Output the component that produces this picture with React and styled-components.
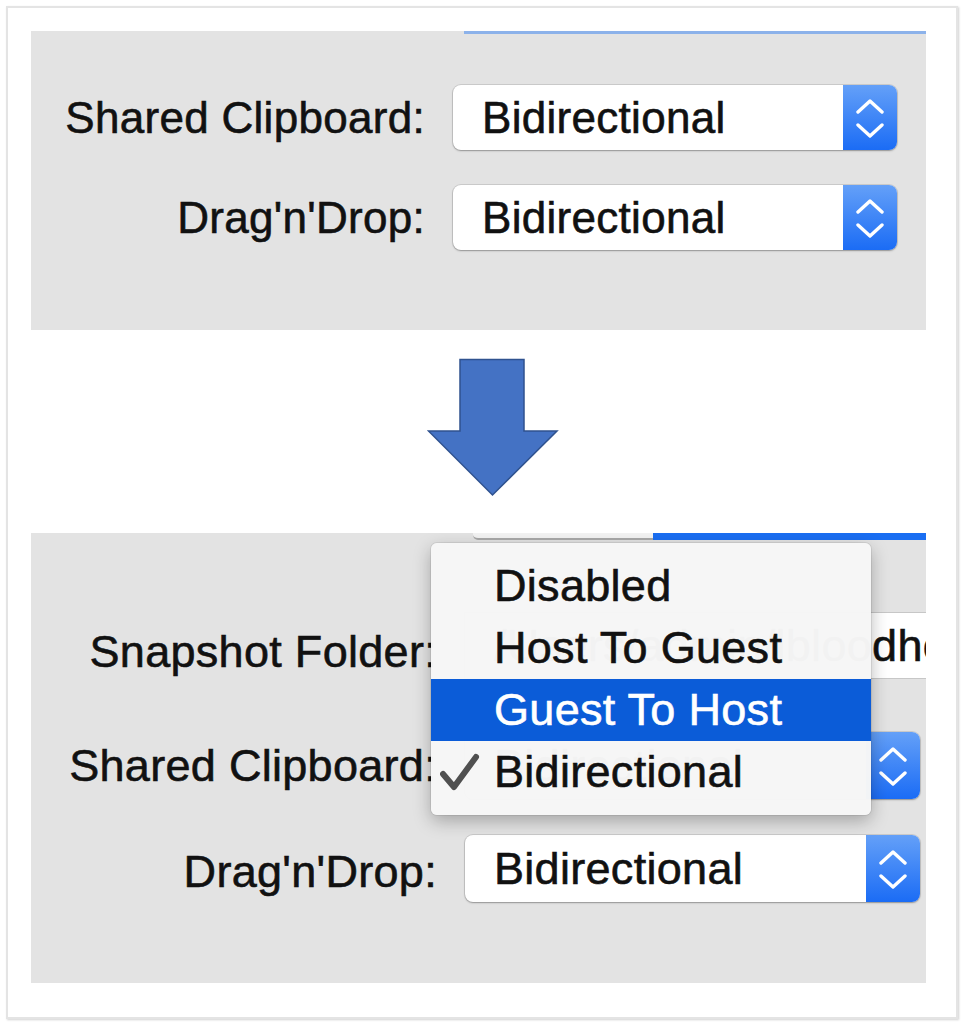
import React from 'react'
import styled, { createGlobalStyle } from 'styled-components'

const GlobalStyle = createGlobalStyle`
  html, body {
    margin: 0;
    padding: 0;
    background: #fff;
  }

  body {
    font-family: 'Liberation Sans', Arial, sans-serif;
    color: #111;
    -webkit-text-stroke: 0.6px currentColor;
  }
`

const Frame = styled.div`
  box-sizing: border-box;
  width: 952px;
  height: 1013px;
  margin: 6px;
  padding: 23px 30px 0 23px;
  border: 2px solid #e4e4e4;
  box-shadow: 1px 1px 2px rgba(0, 0, 0, 0.18);
  background: #fff;
`

const Panel = styled.div`
  position: relative;
  width: 895px;
  height: ${(p) => p.$height}px;
  background: #e3e3e3;
  overflow: hidden;
`

const TopLine = styled.div`
  margin-left: 433px;
  height: 3px;
  background: #8cb2ea;
`

const TabStrip = styled.div`
  display: flex;
  margin-left: 442px;
  height: 7px;
`

const LightTab = styled.div`
  width: 180px;
  height: 5px;
  background: #f3f3f3;
  border-bottom: 2px solid #a9a9a9;
  border-bottom-left-radius: 5px;
`

const BlueTab = styled.div`
  flex: 1;
  background: #1a6ef2;
`

const Row = styled.div`
  display: flex;
  align-items: center;
  gap: 28px;
  margin-top: ${(p) => p.$top}px;
  font-size: ${(p) => p.$size}px;
  letter-spacing: 0.3px;
`

const Label = styled.div`
  width: ${(p) => p.$width}px;
  flex-shrink: 0;
  text-align: right;
  white-space: nowrap;
  color: #111;
  padding-top: ${(p) => p.$drop || 0}px;
`

const Select = styled.div`
  display: flex;
  flex-shrink: 0;
  width: ${(p) => p.$width}px;
  height: ${(p) => p.$height}px;
  border-radius: 8px;
  background: #fff;
  box-shadow: 0 0 0 1px rgba(0, 0, 0, 0.1), 0 1px 2px rgba(0, 0, 0, 0.28);
`

const Value = styled.div`
  flex: 1;
  display: flex;
  align-items: center;
  padding-left: 29px;
  white-space: nowrap;
  color: #111;
`

const Stepper = styled.div`
  width: 54px;
  display: flex;
  align-items: center;
  justify-content: center;
  border-radius: 0 8px 8px 0;
  background: linear-gradient(180deg, #64a0f8 0%, #1b6cf5 100%);
`

const Field = styled.div`
  flex-shrink: 0;
  display: flex;
  align-items: center;
  width: 520px;
  height: 65px;
  padding-left: 29px;
  box-sizing: border-box;
  background: #fff;
  box-shadow: 0 0 0 1px rgba(0, 0, 0, 0.12);
  white-space: nowrap;
  overflow: hidden;
`

const ArrowRow = styled.div`
  height: 203px;
  box-sizing: border-box;
  padding: 28px 0 0 396px;
`

const Menu = styled.div`
  position: absolute;
  left: 400px;
  top: 10px;
  width: 440px;
  height: 272px;
  box-sizing: border-box;
  padding: 12px 0;
  border-radius: 6px;
  background: rgba(246, 246, 246, 0.985);
  box-shadow: 0 6px 18px rgba(0, 0, 0, 0.28), 0 0 0 1px rgba(0, 0, 0, 0.07);
  font-size: 45px;
  letter-spacing: 0.3px;
`

const Item = styled.div`
  position: relative;
  height: 62px;
  display: flex;
  align-items: center;
  padding-left: 63px;
  background: ${(p) => (p.$active ? '#0b5cd8' : 'transparent')};
  color: ${(p) => (p.$active ? '#fff' : '#111')};
  white-space: nowrap;
`

const Check = styled.svg`
  position: absolute;
  left: 9px;
  top: 12px;
`

const Chevrons = () => (
  <svg width='54' height='40' viewBox='0 0 54 40'>
    <path
      d='M15 14 L27 3 L39 14 M15 27 L27 38 L39 27'
      fill='none'
      stroke='#fff'
      strokeWidth='3.4'
      strokeLinecap='round'
      strokeLinejoin='round'
    />
  </svg>
)

const Popup = ({ width, height, value }) => (
  <Select $width={width} $height={height}>
    <Value>{value}</Value>
    <Stepper>
      <Chevrons />
    </Stepper>
  </Select>
)

const DownArrow = () => (
  <svg width='132' height='139' viewBox='0 0 132 139'>
    <polygon
      points='33,1.5 97,1.5 97,73 130,73 65.5,137 1.5,73 33,73'
      fill='#4472c4'
      stroke='#2f528f'
      strokeWidth='1.5'
    />
  </svg>
)

const options = ['Disabled', 'Host To Guest', 'Guest To Host', 'Bidirectional']

const App = () => {
  return (
    <>
      <GlobalStyle />
      <Frame>
        <Panel $height={299}>
          <TopLine />
          <Row $top={51} $size={44}>
            <Label $width={394}>Shared Clipboard:</Label>
            <Popup width={444} height={65} value='Bidirectional' />
          </Row>
          <Row $top={35} $size={44}>
            <Label $width={394}>Drag'n'Drop:</Label>
            <Popup width={444} height={65} value='Bidirectional' />
          </Row>
        </Panel>

        <ArrowRow>
          <DownArrow />
        </ArrowRow>

        <Panel $height={450}>
          <TabStrip>
            <LightTab />
            <BlueTab />
          </TabStrip>
          <Row $top={73} $size={45}>
            <Label $width={406} $drop={12}>Snapshot Folder:</Label>
            <Field>/Users/admin/lbloodhound</Field>
          </Row>
          <Row $top={54} $size={45}>
            <Label $width={406}>Shared Clipboard:</Label>
            <Popup width={455} height={67} value='Bidirectional' />
          </Row>
          <Row $top={36} $size={45}>
            <Label $width={406} $drop={6}>Drag'n'Drop:</Label>
            <Popup width={455} height={67} value='Bidirectional' />
          </Row>

          <Menu>
            {options.map((option) => (
              <Item key={option} $active={option === 'Guest To Host'}>
                {option === 'Bidirectional' && (
                  <Check width='40' height='40' viewBox='0 0 40 40'>
                    <path
                      d='M3 21 L14 34 L36 4'
                      fill='none'
                      stroke='#505050'
                      strokeWidth='6'
                      strokeLinecap='round'
                      strokeLinejoin='round'
                    />
                  </Check>
                )}
                {option}
              </Item>
            ))}
          </Menu>
        </Panel>
      </Frame>
    </>
  )
}

export default App
